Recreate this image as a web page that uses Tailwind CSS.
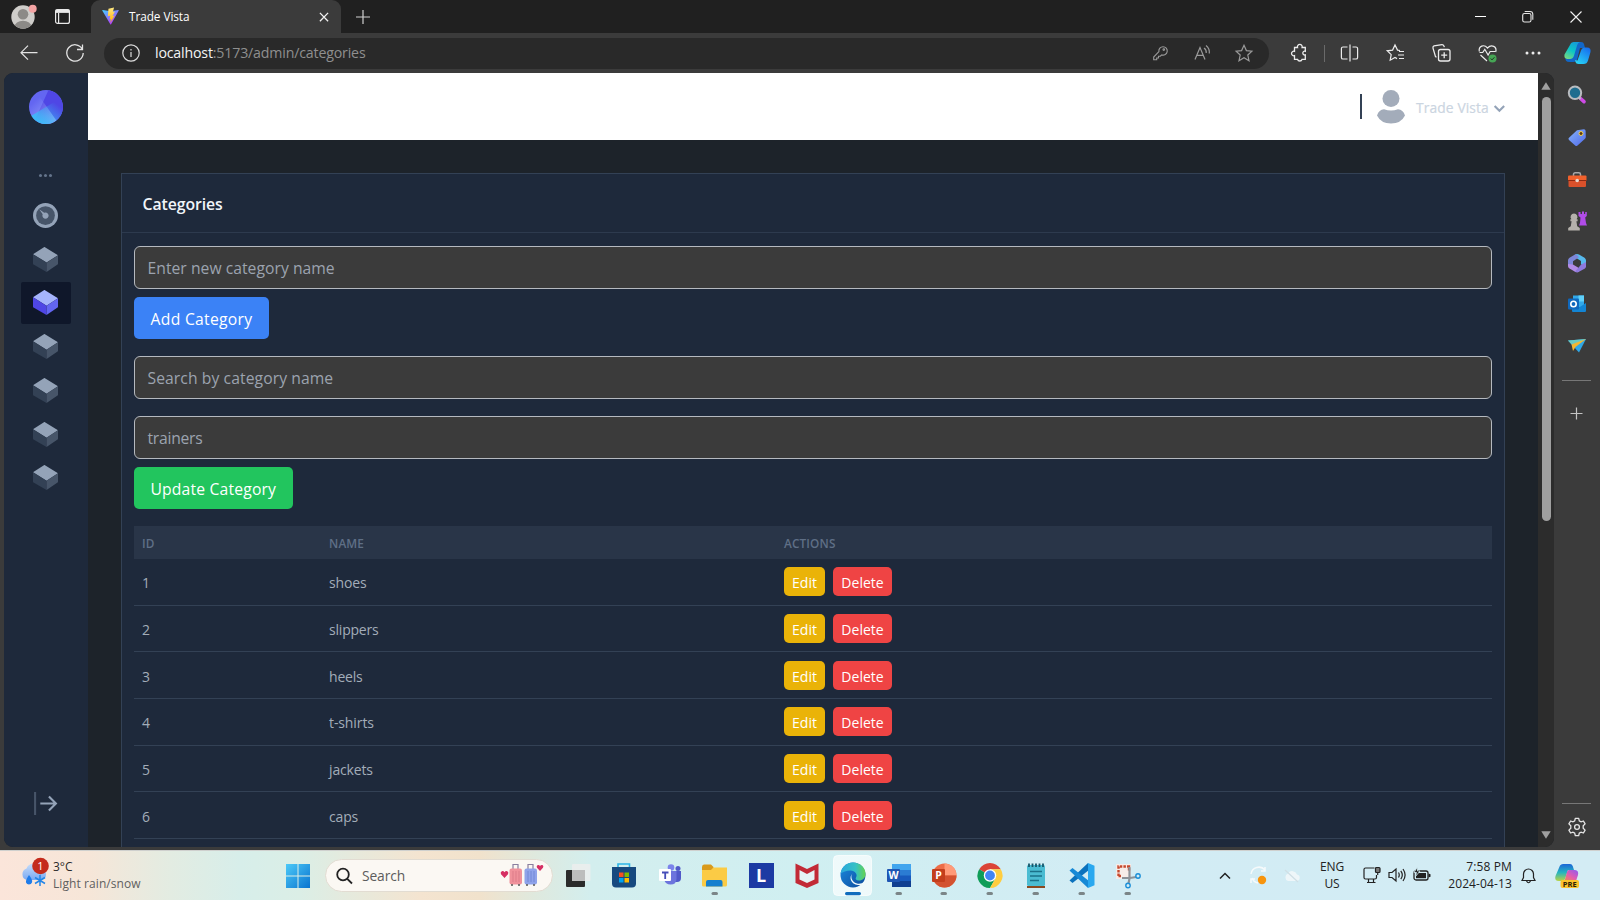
<!DOCTYPE html>
<html lang="en">
<head>
<meta charset="utf-8">
<title>Trade Vista</title>
<script src="https://cdn.jsdelivr.net/npm/@tailwindcss/browser@4"></script>
</head>
<body class="w-[1600px] h-[900px] overflow-hidden bg-[#3b3b3b] font-['Open_Sans','Noto_Sans',sans-serif] flex flex-col">

<!-- shared symbols -->
<svg class="hidden">
  <symbol id="cube" viewBox="0 0 24 24">
    <path fill="#94a3b8" d="M13 15l11-7L11.504.136a1 1 0 00-1.019.007L0 7l13 8z"/>
    <path fill="#334155" d="M13 15L0 7v9c0 .355.189.685.496.864L13 24v-9z"/>
    <path fill="#475569" d="M13 15.047V24l10.573-7.181A.999.999 0 0024 16V8l-11 7.047z"/>
  </symbol>
</svg>

<!-- tab strip -->
<header class="h-[33px] shrink-0 bg-[#202020] flex items-center">
  <div class="w-[91px] h-full flex items-center shrink-0">
    <svg class="ml-[11px]" width="26" height="26" viewBox="0 0 26 26"><defs><clipPath id="pc"><circle cx="12" cy="13" r="11.7"/></clipPath></defs><circle cx="12" cy="13" r="11.7" fill="#cfcdca"/><g clip-path="url(#pc)" fill="#8c8a87"><circle cx="12" cy="10.2" r="5.3"/><ellipse cx="12" cy="23" rx="8.5" ry="6.3"/></g><circle cx="21.7" cy="4.8" r="4" fill="#f4a3a3"/></svg>
    <svg class="ml-[17px]" width="17" height="17" viewBox="0 0 17 17" fill="none" stroke="#e8e8e8" stroke-width="1.2"><rect x="1.6" y="1.6" width="13.8" height="13.8" rx="2"/><path d="M4.6 5v10"/><path d="M1.600 3.200h13.800" stroke-width="3.400"/></svg>
  </div>
  <div class="w-[250px] h-full bg-[#3b3b3b] rounded-t-[9px] flex items-center shrink-0">
    <svg class="ml-[10px]" width="19" height="19" viewBox="0 0 32 32"><defs><linearGradient id="va" x1="0" y1="0" x2=".6" y2="1"><stop stop-color="#41d1ff"/><stop offset="1" stop-color="#bd34fe"/></linearGradient><linearGradient id="vb" x1="0" y1="0" x2="0" y2="1"><stop stop-color="#ffea83"/><stop offset="1" stop-color="#ffa800"/></linearGradient></defs><path d="M29.900 6.100 17 29.200c-.3.5-1 .5-1.300 0L2.100 6.100c-.3-.6.1-1.200.8-1.100L16 7.200l13.100-2.200c.7-.1 1.100.6.8 1.100Z" fill="url(#va)"/><path d="M22 1 12.600 2.900 11.500 15.500l4-.8-1 6.500 2.500-.6L15.500 27 23 14.500l-3.600.5L23.500 7.500l-3.500.8z" fill="url(#vb)"/></svg>
    <span class="ml-[9px] text-[11.800px] text-white tracking-[-0.060px] w-[180px] leading-[16px] mb-px">Trade Vista</span>
    <svg class="ml-[9px]" width="12" height="12" viewBox="0 0 12 12" stroke="#f2f2f2" stroke-width="1.300"><path d="M1.900 1.900l8.200 8.400M10.100 1.900l-8.200 8.400"/></svg>
  </div>
  <svg class="ml-[14px]" width="16" height="16" viewBox="0 0 16 16" stroke="#d0d0d0" stroke-width="1.200"><path d="M8 1v14M1 8h14"/></svg>
  <div class="ml-auto flex items-center">
    <svg class="w-[48px] h-[16px]" viewBox="0 0 48 16"><path d="M19 7.500h11" stroke="#fff" stroke-width="1"/></svg>
    <svg class="w-[48px] h-[16px]" viewBox="0 0 48 16" fill="none" stroke="#e6e6e6" stroke-width="1.100"><rect x="18.700" y="4.500" width="8.300" height="8.500" rx="1.800"/><path d="M20.700 2.500h5.300q2.800 0 2.800 2.800v5.500"/></svg>
    <svg class="w-[48px] h-[16px]" viewBox="0 0 48 16"><path d="M18.500 2.500l11 11M29.500 2.500l-11 11" stroke="#f2f2f2" stroke-width="1.100"/></svg>
  </div>
</header>

<!-- toolbar -->
<nav class="h-[40px] shrink-0 flex items-center">
  <svg class="ml-[19px]" width="20" height="20" viewBox="0 0 20 20" fill="none" stroke="#e3e3e3" stroke-width="1.200"><path d="M18.500 9.700H2M9 2.700L2 9.700l7 7"/></svg>
  <svg class="ml-[26px]" width="20" height="20" viewBox="0 0 20 20" fill="none" stroke="#e3e3e3" stroke-width="1.300"><path d="M17.200 6A8.200 8.200 0 1 0 18.200 10M17.500 1.500V6.500H12"/></svg>
  <div class="ml-[19px] w-[1165px] h-[31px] rounded-full bg-[#292929] flex items-center">
    <svg class="ml-[18px]" width="18" height="18" viewBox="0 0 18 18" fill="none" stroke="#dcdcdc" stroke-width="1.200"><circle cx="9" cy="9" r="8.200"/><path d="M9 8v5M9 5v1.400"/></svg>
    <span class="ml-[15px] text-[14.200px] text-[#8f8f8f] leading-[20px] tracking-[-0.180px] whitespace-nowrap"><span class="text-[#f4f4f4]">localhost</span>:5173/admin/categories</span>
    <div class="ml-auto mr-[4px] flex items-center text-[#9a9a9a]">
      <svg class="w-[43px] h-[18px]" viewBox="0 0 43 18" fill="none" stroke="currentColor" stroke-width="1.100"><path d="M15.700 15.700v-2.700l5.200-5.400a4.200 4.200 0 1 1 2.800 3.300l-1.400 1.300h-1.800v1.800h-1.800v1.700z"/><circle cx="25.800" cy="5.600" r=".8"/></svg>
      <svg class="w-[42px] h-[18px]" viewBox="0 0 42 18" fill="none" stroke="currentColor" stroke-width="1.200"><path d="M14 15.500L19 3.500 24 15.500M15.800 11.300h6.500M23 4a5 5 0 0 1 2.200 5M25 1.500a9 9 0 0 1 3.300 8"/></svg>
      <svg class="w-[42px] h-[18px]" viewBox="0 0 42 18" fill="none" stroke="currentColor" stroke-width="1.200"><path d="M21 1.300l2.400 5.300 5.500.6-4.100 3.800 1.200 5.700-5-2.900-5 2.900 1.200-5.700-4.100-3.800 5.500-.6z"/></svg>
    </div>
  </div>
  <div class="ml-[7px] flex items-center text-[#ececec]">
    <svg class="w-[46px] h-[20px]" viewBox="0 0 46 20" fill="none" stroke="currentColor" stroke-width="1.300"><path d="M18.500 4.500h3a2.400 2.400 0 1 1 4.600 0h3.200v3.800a1.900 1.900 0 1 0 0 3.600v4.400h-3.200a2.400 2.400 0 0 1-4.600 0h-3v-3.600a2.300 2.300 0 1 1 0-4.400z"/></svg>
    <div class="w-px h-[17px] bg-[#6a6a6a] ml-[2px]"></div>
    <svg class="w-[47px] h-[20px]" viewBox="0 0 47 20" fill="none" stroke="currentColor" stroke-width="1.200"><path d="M22.500 4H18q-1.600 0-1.600 1.600v8.800q0 1.600 1.600 1.600h4.500M27.500 4H31q1.600 0 1.600 1.600v8.800q0 1.600-1.600 1.600h-3.500M25 1.500v17"/></svg>
    <svg class="w-[46px] h-[20px]" viewBox="0 0 46 20" fill="none" stroke="currentColor" stroke-width="1.200"><path d="M28 7.500l-2.500-.4L23 2l-2.400 5.100-5.400.7 4 3.800-1 5.600 4.800-2.700 2 1.100M27 8.500h5M26 12h6M27 15.500h5"/></svg>
    <svg class="w-[46px] h-[20px]" viewBox="0 0 46 20" fill="none" stroke="currentColor" stroke-width="1.300"><rect x="20.500" y="6.500" width="11.500" height="11.500" rx="2"/><path d="M26.200 9.200v6M23.200 12.200h6M18.500 14.200l-1-.6-2.500-8.500q-.4-1.600 1-2.200l8-1.300q1.700-.1 2.400 2.500"/></svg>
    <svg class="w-[46px] h-[20px]" viewBox="0 0 46 20" fill="none" stroke="currentColor" stroke-width="1.200"><path d="M15.300 8.500C14.300 3 20 .8 23.500 5c4-4.200 9.800-1.500 8.200 4M15.500 9.500h3.200l2.100-3.200 3.300 5.700 2-3.500h5M16.500 12l6.500 6"/><circle cx="28.500" cy="15.500" r="4" fill="#46a555" stroke="none"/><path d="M26.700 15.500l1.300 1.400 2.400-2.600" stroke="#203020" stroke-width="1"/></svg>
    <svg class="w-[45px] h-[20px]" viewBox="0 0 45 20" fill="currentColor"><circle cx="17" cy="10" r="1.500"/><circle cx="23" cy="10" r="1.500"/><circle cx="29" cy="10" r="1.500"/></svg>
    <svg class="w-[44px] h-[26px]" viewBox="0 0 44 26"><defs><linearGradient id="ca" x1=".7" y1="0" x2=".2" y2="1"><stop stop-color="#169bd8"/><stop offset=".5" stop-color="#0cc6c5"/><stop offset="1" stop-color="#77d980"/></linearGradient><linearGradient id="cb" x1=".2" y1="1" x2=".9" y2="0"><stop stop-color="#28d4f5"/><stop offset="1" stop-color="#1669ee"/></linearGradient></defs><g transform="translate(1 0)"><path d="M16 4q1.500-2 4-2h5q2.500 0 3 2l1 4h-5l-3 12q-1 2-3.500 2h-4q-5 0-4-5z" fill="#1267c8"/><path d="M14 5q1-3 4-3h6q-2 .5-2.800 3l-3.300 11q-1 3-4 3h-2.500q-3.700-.5-2.900-4.500z" fill="url(#ca)"/><path d="M32 20.500q-1 3.500-4.500 3.500h-5q-2.500 0-3-2l-.5-2 2.500.5 3.500-10q1-3 4-3h2q4.300 0 3.500 4.500z" fill="url(#cb)"/></g></svg>
  </div>
</nav>

<div class="h-[777px] shrink-0 flex">
  <!-- page viewport -->
  <div class="ml-[4px] mb-[3px] w-[1550px] h-[774px] rounded-[9px] overflow-hidden flex bg-[#1d232a]">
    <aside class="w-[83.500px] h-full bg-[#1e293b] flex flex-col items-center shrink-0">
      <svg class="mt-[16.500px] shrink-0" width="34" height="34" viewBox="0 0 32 32"><defs><linearGradient id="la" x1="28.500%" y1="20.200%" x2="100%" y2="108.100%"><stop stop-color="#A5B4FC" stop-opacity="0"/><stop offset="1" stop-color="#A5B4FC"/></linearGradient><linearGradient id="lb" x1="88.600%" y1="29.200%" x2="22.400%" y2="100%"><stop stop-color="#38BDF8" stop-opacity="0"/><stop offset="1" stop-color="#38BDF8"/></linearGradient></defs><rect width="32" height="32" rx="16" fill="#6366F1"/><path d="M18.277.16C26.035 1.267 32 7.938 32 16c0 8.837-7.163 16-16 16a15.937 15.937 0 01-10.426-3.863L18.277.161z" fill="#4F46E5"/><path d="M7.404 2.503l18.339 26.190A15.930 15.930 0 0116 32C7.163 32 0 24.837 0 16 0 10.327 2.952 5.344 7.404 2.503z" fill="url(#la)"/><path d="M2.223 24.140L29.777 7.860A15.926 15.926 0 0132 16c0 8.837-7.163 16-16 16-5.864 0-10.991-3.154-13.777-7.860z" fill="url(#lb)"/></svg>
      <div class="mt-[50px] flex gap-[2px]"><i class="w-[3px] h-[3px] rounded-full bg-[#64748b]"></i><i class="w-[3px] h-[3px] rounded-full bg-[#64748b]"></i><i class="w-[3px] h-[3px] rounded-full bg-[#64748b]"></i></div>
      <ul class="mt-[18px] flex flex-col gap-[2.080px]">
        <li class="w-[50px] h-[41.670px] flex items-center justify-center"><svg width="25" height="25" viewBox="0 0 24 24"><circle cx="12" cy="12" r="12" fill="#94a3b8"/><circle cx="12" cy="12" r="9" fill="#475569"/><path fill="#94a3b8" d="M12 15c-1.654 0-3-1.346-3-3 0-.462.113-.894.3-1.285L6 6l4.714 3.301A2.973 2.973 0 0112 9c1.654 0 3 1.346 3 3s-1.346 3-3 3z"/></svg></li>
        <li class="w-[50px] h-[41.670px] flex items-center justify-center"><svg width="25" height="25"><use href="#cube"/></svg></li>
        <li class="w-[50px] h-[41.670px] flex items-center justify-center bg-[#0f172a] rounded-[2px]"><svg width="25" height="25" viewBox="0 0 24 24"><path fill="#a5b4fc" d="M13 15l11-7L11.504.136a1 1 0 00-1.019.007L0 7l13 8z"/><path fill="#4f46e5" d="M13 15L0 7v9c0 .355.189.685.496.864L13 24v-9z"/><path fill="#6366f1" d="M13 15.047V24l10.573-7.181A.999.999 0 0024 16V8l-11 7.047z"/></svg></li>
        <li class="w-[50px] h-[41.670px] flex items-center justify-center"><svg width="25" height="25"><use href="#cube"/></svg></li>
        <li class="w-[50px] h-[41.670px] flex items-center justify-center"><svg width="25" height="25"><use href="#cube"/></svg></li>
        <li class="w-[50px] h-[41.670px] flex items-center justify-center"><svg width="25" height="25"><use href="#cube"/></svg></li>
        <li class="w-[50px] h-[41.670px] flex items-center justify-center"><svg width="25" height="25"><use href="#cube"/></svg></li>
      </ul>
      <svg class="mt-auto mb-[31px] shrink-0" width="25" height="25" viewBox="0 0 24 24"><path fill="#94a3b8" d="M19.586 11l-5-5L16 4.586 23.414 12 16 19.414 14.586 18l5-5H7v-2z"/><path fill="#475569" d="M3 23H1V1h2z"/></svg>
    </aside>

    <main class="w-[1450.500px] h-full flex flex-col shrink-0">
      <div class="h-[67px] shrink-0 bg-white flex items-center justify-end">
        <div class="w-[2px] h-[25px] bg-[#334155] mr-[14px]"></div>
        <svg width="30" height="34" viewBox="0 0 30 34" fill="#a3acba"><circle cx="15" cy="8.500" r="8.500"/><path d="M1 25.500Q3 19.500 8 19.300q7 2.500 14 0 5 .2 7 6.200Q25 33.500 15 33.500T1 25.500z"/></svg>
        <span class="ml-[10px] w-[74px] text-[13.800px] font-medium text-[#cbd5e1] [-webkit-text-stroke:0.2px_#cbd5e1] leading-[20px] mt-[3px] tracking-[0.120px] whitespace-nowrap">Trade Vista</span>
        <svg class="ml-[3px] mr-[32px] mt-[4px]" width="13" height="13" viewBox="0 0 12 12" fill="#94a3b8"><path d="M5.900 9.400L.8 4.300l1.400-1.400 3.700 3.700 3.700-3.700L11 4.300z"/></svg>
      </div>
      <section class="mt-[33px] ml-[33.500px] w-[1384px] h-[720px] shrink-0 bg-[#1e293b] border border-[#334155]">
        <h2 class="h-[59px] border-b border-[#2d3a4e] pl-[20.500px] pt-[19px] text-[15.800px] leading-[23px] font-semibold text-[#f1f5f9] tracking-[-0.080px]">Categories</h2>
        <div class="px-[12px] pt-[13px] flex flex-col items-start">
          <div class="w-full h-[43px] rounded-[6px] border border-[#b5b9bf] bg-[#3b3b3b] px-[12.500px] text-[15.700px] leading-[43px] text-[#9ca3af] tracking-[0.030px]">Enter new category name</div>
          <div class="mt-[8px] w-[135px] h-[42px] rounded-[5px] bg-[#3b82f6] text-[15.700px] leading-[44px] text-center text-white tracking-[0.280px] whitespace-nowrap">Add Category</div>
          <div class="mt-[17px] w-full h-[43px] rounded-[6px] border border-[#b5b9bf] bg-[#3b3b3b] px-[12.500px] text-[15.700px] leading-[43px] text-[#9ca3af] tracking-[0.080px]">Search by category name</div>
          <div class="mt-[17px] w-full h-[43px] rounded-[6px] border border-[#b5b9bf] bg-[#3b3b3b] px-[12.500px] text-[15.700px] leading-[43px] text-[#9ca3af] tracking-[-0.250px]">trainers</div>
          <div class="mt-[8px] w-[158.500px] h-[42px] rounded-[5px] bg-[#22c55e] text-[15.700px] leading-[44px] text-center text-white tracking-[0.180px] whitespace-nowrap">Update Category</div>
          <div class="mt-[17px] w-full text-[14px] text-[#a3adb9] leading-[20px]">
            <div class="h-[33px] bg-[#293548] grid grid-cols-[187px_455px_1fr] items-center pl-[8px] pt-px text-[11.800px] font-semibold tracking-[0.140px] text-[#5f6f86]"><span>ID</span><span>NAME</span><span>ACTIONS</span></div>
            <div class="h-[46.670px] border-b border-[#334155] grid grid-cols-[187px_455px_1fr] items-center pl-[8px]"><span class="pt-[3px]">1</span><span class="pt-[3px] tracking-[-0.150px]">shoes</span><span class="flex gap-[8px] text-white text-center leading-[31px]"><span class="w-[41px] h-[29px] rounded-[5px] bg-[#eab308]">Edit</span><span class="w-[59px] h-[29px] rounded-[5px] bg-[#ef4444]">Delete</span></span></div>
            <div class="h-[46.670px] border-b border-[#334155] grid grid-cols-[187px_455px_1fr] items-center pl-[8px]"><span class="pt-[3px]">2</span><span class="pt-[3px] tracking-[-0.200px]">slippers</span><span class="flex gap-[8px] text-white text-center leading-[31px]"><span class="w-[41px] h-[29px] rounded-[5px] bg-[#eab308]">Edit</span><span class="w-[59px] h-[29px] rounded-[5px] bg-[#ef4444]">Delete</span></span></div>
            <div class="h-[46.670px] border-b border-[#334155] grid grid-cols-[187px_455px_1fr] items-center pl-[8px]"><span class="pt-[3px]">3</span><span class="pt-[3px] tracking-[-0.200px]">heels</span><span class="flex gap-[8px] text-white text-center leading-[31px]"><span class="w-[41px] h-[29px] rounded-[5px] bg-[#eab308]">Edit</span><span class="w-[59px] h-[29px] rounded-[5px] bg-[#ef4444]">Delete</span></span></div>
            <div class="h-[46.670px] border-b border-[#334155] grid grid-cols-[187px_455px_1fr] items-center pl-[8px]"><span class="pt-[3px]">4</span><span class="pt-[3px] tracking-[-0.100px]">t-shirts</span><span class="flex gap-[8px] text-white text-center leading-[31px]"><span class="w-[41px] h-[29px] rounded-[5px] bg-[#eab308]">Edit</span><span class="w-[59px] h-[29px] rounded-[5px] bg-[#ef4444]">Delete</span></span></div>
            <div class="h-[46.670px] border-b border-[#334155] grid grid-cols-[187px_455px_1fr] items-center pl-[8px]"><span class="pt-[3px]">5</span><span class="pt-[3px] tracking-[-0.150px]">jackets</span><span class="flex gap-[8px] text-white text-center leading-[31px]"><span class="w-[41px] h-[29px] rounded-[5px] bg-[#eab308]">Edit</span><span class="w-[59px] h-[29px] rounded-[5px] bg-[#ef4444]">Delete</span></span></div>
            <div class="h-[46.670px] border-b border-[#334155] grid grid-cols-[187px_455px_1fr] items-center pl-[8px]"><span class="pt-[3px]">6</span><span class="pt-[3px] tracking-[-0.150px]">caps</span><span class="flex gap-[8px] text-white text-center leading-[31px]"><span class="w-[41px] h-[29px] rounded-[5px] bg-[#eab308]">Edit</span><span class="w-[59px] h-[29px] rounded-[5px] bg-[#ef4444]">Delete</span></span></div>
          </div>
        </div>
      </section>
    </main>

    <div class="w-[16px] h-full bg-[#2c2c2c] flex flex-col items-center shrink-0">
      <svg class="mt-[9px]" width="10" height="8" viewBox="0 0 10 8"><path d="M5 .3l4.700 7.500H.3z" fill="#9f9f9f"/></svg>
      <div class="mt-[7px] w-[9px] h-[424px] rounded-full bg-[#9f9f9f]"></div>
      <svg class="mt-auto mb-[8px]" width="10" height="8" viewBox="0 0 10 8"><path d="M5 7.700L9.700.2H.3z" fill="#9f9f9f"/></svg>
    </div>
  </div>

  <!-- browser side rail -->
  <div class="w-[46px] h-full flex flex-col items-center pr-px">
    <svg class="mt-[12px] mb-[22.500px]" width="20" height="20" viewBox="0 0 20 20"><path d="M13.500 13.500l3.500 3.200" stroke="#cf4be6" stroke-width="3.600" stroke-linecap="round"/><path d="M11.500 12l2 2" stroke="#b9bcc0" stroke-width="2.400"/><circle cx="8" cy="7.800" r="6.200" fill="#1f6d8f" stroke="#b9bcc0" stroke-width="2"/></svg>
    <svg class="mb-[22px]" width="20" height="20" viewBox="0 0 20 20"><defs><linearGradient id="tg" x1="0" y1="0" x2="1" y2="1"><stop stop-color="#86b4fb"/><stop offset="1" stop-color="#5068e8"/></linearGradient></defs><path d="M10 2.200L17 1.200q1.500 0 1.600 1.500l.2 6.300q0 1-.8 1.700L10.500 17.500q-1.200 1-2.300 0L2 12q-1.200-1.200 0-2.300z" fill="url(#tg)"/><circle cx="14" cy="5.500" r="2" fill="#5b3b12" stroke="#f6cf4a"/></svg>
    <svg class="mb-[21px]" width="20" height="20" viewBox="0 0 20 20"><path d="M6.500 6V4.500q0-1.700 1.700-1.700h3.600q1.700 0 1.700 1.700V6" fill="none" stroke="#a8a8a8" stroke-width="1.500"/><rect x="1" y="5.500" width="18.500" height="5.500" rx="1" fill="#f1612c"/><path d="M1.500 10.500H19v5.500q0 1-1 1H2.500q-1 0-1-1z" fill="#d9512b"/><path d="M1 10.500h18.500" stroke="#8d2a12"/><circle cx="10.200" cy="10.500" r="1.800" fill="#e5d7cf"/></svg>
    <svg class="mb-[22px]" width="20" height="20" viewBox="0 0 20 20"><path d="M11.500 1h2v2h1.500V.6h2V3h1.200V1h1.600v4l-1.600 1.500.8 5.500 1 2.500h-8l1-2.500.5-5.500L11.500 5z" fill="#b14ce8"/><path d="M7 2.500a3.500 3.500 0 0 1 2.600 5.800h1v2H9.400l.8 5 2.600 1.700v2.500H1.200V17l2.600-1.700.8-5H3.400v-2h1A3.500 3.500 0 0 1 7 2.500z" fill="#b5b1ab"/></svg>
    <svg class="mb-[21.500px]" width="20" height="20" viewBox="0 0 20 20"><path d="M8 1.500q2-1 4 0l5.500 3.200q1.500 1 1.500 2.800v5.500l-5-1.500V8L8.500 4.500z" fill="#57b9ec"/><path d="M8 1.500L2.500 4.700Q1 5.700 1 7.500v5.800l5-1.600V8.200l6-4Q10 .8 8 1.500z" fill="#7d86d8"/><path d="M1 11v2q0 1.500 1.500 2.500L8 18.800q2 1 4 0l-1-4.300-5-3z" fill="#b38be6"/><path d="M19 9v4.500q0 1.200-1.500 2.200L12 18.800q-2 .8-4-.3l6-6.700z" fill="#8e79dc"/></svg>
    <svg class="mb-[22px]" width="20" height="20" viewBox="0 0 20 20"><rect x="6" y="1.500" width="11" height="12" fill="#31a9ea"/><rect x="11.500" y="1.500" width="5.500" height="6" fill="#5fd0fa"/><path d="M5 9l7 4.500 7-4.500v8q0 1-1 1H6q-1 0-1-1z" fill="#1385d4"/><rect x="1" y="4.500" width="11" height="11" rx="1" fill="#0f68bd"/><circle cx="6.500" cy="10" r="2.700" fill="none" stroke="#fff" stroke-width="1.600"/></svg>
    <svg width="20" height="20" viewBox="0 0 20 20"><path d="M1 4.500l18-1.500L12 16.500z" fill="#2fa7e6"/><path d="M1 4.500l18-1.500L6 10z" fill="#6cc9c0"/><path d="M4.500 8.500L19 3 8.500 11 6 15z" fill="#f4b62f"/></svg>
    <div class="mt-[24px] w-[29px] h-px bg-[#777]"></div>
    <svg class="mt-[26px]" width="13" height="13" viewBox="0 0 13 13" stroke="#c4c4c4" stroke-width="1.200"><path d="M6.500.5v12M.5 6.500h12"/></svg>
    <div class="mt-auto w-[29px] h-px bg-[#777]"></div>
    <svg class="mt-[13px] mb-[13px]" width="20" height="20" viewBox="0 0 20 20" fill="none" stroke="#e6e6e6" stroke-width="1.300"><circle cx="10" cy="10" r="2.400"/><path d="M8.300 1.300h3.400l.6 2.600 1.600.9 2.500-.8 1.700 2.900-1.900 1.900v2.400l1.900 1.900-1.700 2.900-2.500-.8-1.600.9-.6 2.600H8.300l-.6-2.600-1.600-.9-2.500.8-1.700-2.900 1.900-1.900V8.800L1.900 6.900 3.600 4l2.500.8 1.600-.9z" stroke-linejoin="round"/></svg>
  </div>
</div>

<!-- taskbar -->
<footer class="h-[50px] shrink-0 flex items-center border-t border-[#cfd0ce] bg-[linear-gradient(90deg,#fbe5da_0px,#f6e6d8_90px,#e3ece2_170px,#d7eeea_240px,#dbeee6_300px,#f4e4d0_420px,#f1e2cc_480px,#dfe9de_535px,#d3eeee_590px,#d0eff1_800px,#d2ecf4_1100px,#d3ecf4_1600px)] text-[#222]">
  <div class="w-[275px] flex items-center shrink-0">
    <svg class="ml-[20px] mb-[4px]" width="32" height="34" viewBox="0 0 32 34"><defs><linearGradient id="cl" x1="0" y1="0" x2="0" y2="1"><stop stop-color="#c5dcfa"/><stop offset="1" stop-color="#7aa9f2"/></linearGradient></defs><path d="M7 23a6 6 0 0 1-.5-11.500Q9 6 14 7q6-1 8 5 4 1 4 5.500T21 23z" fill="url(#cl)"/><path d="M9 18q4 5 3 7.500a3.200 3.200 0 0 1-6 0Q5.500 23 9 18z" fill="#1f7cea"/><path d="M20 18v11M15 20.500l10 6M25 20.500l-10 6" stroke="#2386e8" stroke-width="1.500"/><circle cx="20.500" cy="9" r="8.300" fill="#c42b1c"/><text x="20.500" y="13" text-anchor="middle" font-size="11" fill="#fff">1</text></svg>
    <div class="ml-[1px] text-[12px] leading-[16.600px] whitespace-nowrap"><div class="text-[#2b2b2b]">3°C</div><div class="text-[#5f5f5f] tracking-[0.080px]">Light rain/snow</div></div>
  </div>
  <svg class="ml-[10px] shrink-0" width="26" height="26" viewBox="0 0 26 26"><defs><linearGradient id="wg" x1="0" y1="0" x2="1" y2="1"><stop stop-color="#4cc9f8"/><stop offset="1" stop-color="#0a74cf"/></linearGradient></defs><path d="M1 1h11.500v11.500H1zM13.500 1H25v11.500H13.500zM1 13.500h11.500V25H1zM13.500 13.500H25V25H13.500z" fill="url(#wg)"/></svg>
  <div class="ml-[14px] w-[228px] h-[33px] rounded-full bg-[#fbf8f3] border border-[#e2dcd2] flex items-center shrink-0">
    <svg class="ml-[10px]" width="18" height="18" viewBox="0 0 18 18" fill="none" stroke="#222" stroke-width="1.800"><circle cx="7" cy="7.500" r="5.800"/><path d="M11.300 11.800l4.700 4.700"/></svg>
    <span class="ml-[8px] text-[13.800px] leading-[20px] text-[#5c5c5c] tracking-[-0.100px]">Search</span>
    <svg class="ml-auto mr-[8px] mb-px" width="44" height="24" viewBox="0 0 44 24"><path d="M4.500 15L1 11.200q-1-2 .8-3 1.700-.5 2.700 1 1-1.500 2.800-1 1.700 1 .7 3z" fill="#d62f63"/><path d="M40 8L37 4.800q-1-1.800.7-2.700 1.500-.4 2.300.8 1-1.200 2.500-.8 1.500.9.500 2.700z" fill="#d62f63"/><path d="M13 7V1.500h5V7M28 7V1.500h5V7" fill="none" stroke="#8a7f9f" stroke-width="1.200"/><rect x="9.500" y="5.500" width="12.500" height="16" rx="2" fill="#f0929b"/><rect x="24.500" y="5.500" width="12.500" height="16" rx="2" fill="#8fa3ea"/><path d="M13 8v11M16 8v11M19 8v11" stroke="#dd7c89"/><path d="M28 8v11M31 8v11M34 8v11" stroke="#7288d6"/><path d="M11 22h2M18 22h2M26 22h2M33 22h2" stroke="#555" stroke-width="1.500"/></svg>
  </div>
  <div class="ml-[2px] flex items-center h-full shrink-0">
    <svg class="w-[45.800px] h-[50px]" viewBox="0 0 45.800 50"><rect x="11" y="19" width="19" height="17" rx="1" fill="#2b2b2b"/><rect x="17" y="13" width="18.500" height="17" rx="1" fill="#eee" fill-opacity=".8"/><rect x="17" y="19" width="13" height="11" fill="#bdbdbd"/></svg>
    <svg class="w-[45.800px] h-[50px]" viewBox="0 0 45.800 50"><path d="M17 17v-4h11.500v4" fill="none" stroke="#2cb5e8" stroke-width="1.600"/><path d="M11 16h24v16.500q0 4-4 4H15q-4 0-4-4z" fill="#17497f"/><path d="M18 21.500h4.500V26H18z" fill="#f25022"/><path d="M23.500 21.500H28V26h-4.500z" fill="#7fba00"/><path d="M18 27h4.500v4.500H18z" fill="#00a4ef"/><path d="M23.500 27H28v4.500h-4.500z" fill="#ffb900"/></svg>
    <svg class="w-[45.800px] h-[50px]" viewBox="0 0 45.800 50"><circle cx="24" cy="16.500" r="3.300" fill="#7b83eb"/><circle cx="31" cy="17.500" r="2.500" fill="#5059c9"/><path d="M27 20h7v7q0 4-4 4h-3z" fill="#5059c9"/><path d="M17 20h12.500v8q0 5.500-6 5.500-5 0-6.500-5z" fill="#6c74dd"/><rect x="12" y="18" width="12" height="12" rx="1" fill="#fff"/><path d="M15 21.500h6.500M18.200 21.500v6.500" stroke="#464eb8" stroke-width="1.800"/></svg>
    <svg class="w-[45.800px] h-[50px]" viewBox="0 0 45.800 50"><path d="M10 16q0-2.500 2-2.500h7l2.500 2.500v5H10z" fill="#d99a1c"/><path d="M10 19h9l2.500-2.500H35V34q0 1.500-1.500 1.500h-22Q10 35.500 10 34z" fill="#fbcb45"/><path d="M14 35.500V31q0-2 2-2h12.500q2 0 2 2v4.500z" fill="#1580cf"/><rect x="19.500" y="41" width="6.500" height="3" rx="1.500" fill="#7b8587"/></svg>
    <div class="w-[45.800px] h-[50px] flex items-center justify-center"><div class="w-[25px] h-[25px] mb-[1px] bg-[#1c3aa3] text-white font-bold text-[18px] leading-[24px] text-center">L</div></div>
    <svg class="w-[45.800px] h-[50px]" viewBox="0 0 45.800 50"><path d="M11.500 12.500l11.500 5.500L34.500 12.500v19.500L23 37 11.500 32z" fill="#c22a36"/><path d="M15.500 19l7.500 4 7.500-4v9.500L23 32l-7.500-3.500z" fill="#e5f3f5"/></svg>
    <div class="w-[45.800px] h-[50px] flex items-center justify-center">
      <svg class="w-[39px] h-[41px]" viewBox="0 0 39 41"><defs><linearGradient id="ea" x1="0" y1=".3" x2="1" y2=".3"><stop stop-color="#2aa6dc"/><stop offset=".6" stop-color="#35c1c5"/><stop offset="1" stop-color="#63d34f"/></linearGradient><linearGradient id="eb" x1="0" y1="0" x2="1" y2="1"><stop stop-color="#1a8be0"/><stop offset="1" stop-color="#0d4a9c"/></linearGradient></defs><rect x=".5" y=".5" width="38" height="40" rx="4" fill="#fff" fill-opacity=".65" stroke="#fff" stroke-opacity=".7"/><circle cx="20" cy="20" r="12.500" fill="url(#eb)"/><path d="M7.600 18.500C8.500 11.500 14 7.500 20 7.500c7 0 12.500 5 12.500 11.500 0 4-3 6.500-6.500 6.500-3 0-4-1.500-3-3 2-3-1-7-5.500-7-4 0-8 1.500-9.900 3z" fill="url(#ea)"/><path d="M20 18c-3 2-2 9 4 10.500 3 .6 5.500-.3 7-1.500l1.500 1-2.500 1.500q-2 .5-5 .5C18 29.500 15 22 20 18z" fill="#f2fafb"/><rect x="12" y="37" width="16" height="3.200" rx="1.600" fill="#0f6cbd"/></svg>
    </div>
    <svg class="w-[45.800px] h-[50px]" viewBox="0 0 45.800 50"><rect x="16" y="13" width="19" height="23" rx="1" fill="#2b7cd3"/><path d="M16 13h19v6H16z" fill="#41a5ee"/><path d="M16 24.500h19V30H16z" fill="#185abd"/><path d="M16 30h19v6H16z" fill="#103f91"/><rect x="11" y="18" width="13" height="13" rx="1" fill="#1f56b3"/><text x="17.500" y="28.300" font-size="10.500" font-weight="700" text-anchor="middle" fill="#fff">W</text><rect x="19.500" y="41" width="6.500" height="3" rx="1.500" fill="#7b8587"/></svg>
    <svg class="w-[45.800px] h-[50px]" viewBox="0 0 45.800 50"><circle cx="23.500" cy="24.500" r="12" fill="#ed6c47"/><path d="M23.500 12.500a12 12 0 0 1 12 12h-12z" fill="#ff9a78"/><path d="M11.500 24.500h24a12 12 0 0 1-24 0z" fill="#d35230"/><rect x="11" y="18" width="13" height="13" rx="1" fill="#c43e1c"/><text x="17.500" y="28.300" font-size="10.500" font-weight="700" text-anchor="middle" fill="#fff">P</text><rect x="19.500" y="41" width="6.500" height="3" rx="1.500" fill="#7b8587"/></svg>
    <svg class="w-[45.800px] h-[50px]" viewBox="0 0 45.800 50"><path d="M12.200 18.200a12.500 12.500 0 0 1 21.600 0H23v6.300z" fill="#db4437"/><path d="M12.200 18.200a12.500 12.500 0 0 0 10.800 18.800l5.400-9.400-5.400-3.100z" fill="#0f9d58"/><path d="M33.800 18.200A12.500 12.500 0 0 1 23 37l5.400-9.400L23 18.200z" fill="#ffcd40"/><circle cx="23" cy="24.500" r="6.200" fill="#fff"/><circle cx="23" cy="24.500" r="4.900" fill="#4285f4"/><rect x="19.500" y="41" width="6.500" height="3" rx="1.500" fill="#7b8587"/></svg>
    <svg class="w-[45.800px] h-[50px]" viewBox="0 0 45.800 50"><rect x="14" y="14" width="18" height="21" rx="1.500" fill="#4bbcd2"/><path d="M16 12.500v3.500M19.500 12.500v3.500M23 12.500v3.500M26.500 12.500v3.500M30 12.500v3.500" stroke="#17566b" stroke-width="1.800"/><path d="M17 20.500h12M17 25h12M17 29.500h9" stroke="#1b7189" stroke-width="1.300"/><path d="M14 35h18v2H14z" fill="#8c4a20"/><rect x="19.500" y="41" width="6.500" height="3" rx="1.500" fill="#7b8587"/></svg>
    <svg class="w-[45.800px] h-[50px]" viewBox="0 0 45.800 50"><path d="M29 12l6.500 2.800v19.500L29 37z" fill="#2aa8ef"/><path d="M29 12v7.800L13.500 32l-3-2.500z" fill="#0b72bd"/><path d="M29 37v-7.800L13.500 17l-3 2.500z" fill="#1689d6"/><rect x="19.500" y="41" width="6.500" height="3" rx="1.500" fill="#7b8587"/></svg>
    <svg class="w-[45.800px] h-[50px]" viewBox="0 0 45.800 50"><rect x="11" y="13" width="15" height="15" fill="#f6ece8"/><path d="M13.500 25V15.500H24v5M13.500 25H17" fill="none" stroke="#c6482c" stroke-width="2.400" stroke-dasharray="2.500 1.100"/><path d="M24.500 16v11.500l-1 5M17 27h8l6-1" fill="none" stroke="#8c9298" stroke-width="2.200"/><circle cx="23" cy="34.500" r="2.200" fill="none" stroke="#1c8fd8" stroke-width="1.400"/><circle cx="33" cy="25" r="2.200" fill="none" stroke="#1c8fd8" stroke-width="1.400"/><rect x="19.500" y="41" width="6.500" height="3" rx="1.500" fill="#7b8587"/></svg>
  </div>
  <div class="ml-auto flex items-center shrink-0 text-[12px] leading-[16.600px]">
    <svg width="12" height="8" viewBox="0 0 12 8" fill="none" stroke="#222" stroke-width="1.500"><path d="M1 6.500l5-5 5 5"/></svg>
    <svg class="ml-[18px]" width="20" height="20" viewBox="0 0 20 20" fill="none" stroke="#f6fafb" stroke-width="1.500"><path d="M2 8a8 8 0 0 1 14-4M16 1v4h-4M3 12a8 8 0 0 0 6 5M2 17v-4h4"/><circle cx="13" cy="14" r="4.200" fill="#f7940d" stroke="none"/></svg>
    <svg class="ml-[14px]" width="18" height="16" viewBox="0 0 18 16"><path d="M5 13a4 4 0 0 1 0-7.500 5 5 0 0 1 9 1A3.300 3.300 0 0 1 14 13z" fill="#eef6f9"/><path d="M2 2l13 12" stroke="#cfdfe5" stroke-width="1.300"/></svg>
    <div class="ml-[18px] w-[26px] text-center tracking-[-0.200px]">ENG<br>US</div>
    <svg class="ml-[18px] mb-px" width="18" height="18" viewBox="0 0 18 18" fill="none" stroke="#222" stroke-width="1.200"><path d="M11.500 2H2.500Q1 2 1 3.500v8Q1 13 2.500 13h9.500q1.500 0 1.500-1.500V9M5.500 13v3.500M10.500 13v3.500M4 16.500h8.500"/><rect x="12.500" y="1.500" width="4.500" height="5" rx="1" fill="#777"/><path d="M14.700 6.500V9"/></svg>
    <svg class="ml-[7px] mb-px" width="18" height="16" viewBox="0 0 18 16" fill="none" stroke="#222" stroke-width="1.200"><path d="M1 5.500h3L8 2v12l-4-3.500H1zM10.500 5.500q1.500 2.500 0 5M12.800 3.800q3 4.200 0 8.400M15 2q4.200 6 0 12"/></svg>
    <svg class="ml-[7px] mb-[2px]" width="18" height="15" viewBox="0 0 18 15"><rect x="1" y="4" width="14" height="9" rx="2" fill="none" stroke="#222" stroke-width="1.300"/><rect x="3" y="6" width="10" height="5.200" fill="#222"/><path d="M15.500 6.500l2 .8v2.400l-2 .8z" fill="#222"/><path d="M4.500 0L1 5.500h2.500L2.500 9.500 7 4H4.500z" fill="#222" stroke="#d3ecf4" stroke-width=".8"/></svg>
    <div class="ml-[9px] w-[72px] text-right whitespace-nowrap tracking-[0.120px]">7:58 PM<br>2024-04-13</div>
    <svg class="ml-[9px]" width="15" height="16" viewBox="0 0 15 16" fill="none" stroke="#222" stroke-width="1.200"><path d="M1 12.500l1.500-3V6a5 5 0 0 1 10 0v3.500l1.500 3zM5.500 13q2 3.500 4 0"/></svg>
    <svg class="ml-[18px] mr-[20px]" width="26" height="26" viewBox="0 0 26 26"><defs><linearGradient id="pa" x1="0" y1="0" x2="0" y2="1"><stop stop-color="#1b66d8"/><stop offset=".5" stop-color="#25b4c0"/><stop offset="1" stop-color="#b9d443"/></linearGradient><linearGradient id="pb" x1="0" y1="1" x2=".8" y2="0"><stop stop-color="#f28a4a"/><stop offset=".5" stop-color="#e35bb0"/><stop offset="1" stop-color="#9a5be8"/></linearGradient></defs><path d="M6 2.500Q7 1 9 1h7q2 0 2.700 2l1.300 4h-6l-3 9q-.5 2-3 2H5q-5 0-3.500-5z" fill="url(#pa)"/><path d="M15 7h6q4 .5 3 5l-2 6H10.500l2.500-9q.5-2 2-2z" fill="url(#pb)"/><rect x="6.500" y="17" width="18.500" height="8" rx="2" fill="#fbc32c"/><text x="15.800" y="23.800" font-size="7.500" font-weight="700" text-anchor="middle" fill="#2b2105">PRE</text></svg>
  </div>
</footer>
</body>
</html>
